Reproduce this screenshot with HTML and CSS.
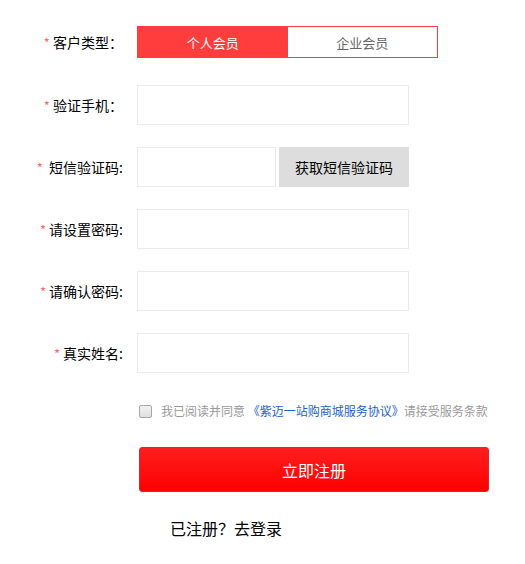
FILE: index.html
```html
<!DOCTYPE html>
<html lang="zh-CN">
<head>
<meta charset="UTF-8">
<meta name="viewport" content="width=device-width, initial-scale=1.0">
<title>注册</title>
<link rel="stylesheet" href="styles.css">
</head>
<body>
<form class="register">
    <div class="row row-type">
        <label class="label"><span class="star">*</span> 客户类型：</label>
        <div class="toggle">
            <a href="#" class="toggle-item active">个人会员</a>
            <a href="#" class="toggle-item">企业会员</a>
        </div>
    </div>
    <div class="row">
        <label class="label"><span class="star">*</span> 验证手机：</label>
        <input type="text" class="field">
    </div>
    <div class="row">
        <label class="label"><span class="star">*</span>&nbsp;&nbsp;短信验证码:</label>
        <div class="sms">
            <input type="text" class="field field-short">
            <button type="button" class="sms-btn">获取短信验证码</button>
        </div>
    </div>
    <div class="row">
        <label class="label"><span class="star">*</span> 请设置密码:</label>
        <input type="password" class="field">
    </div>
    <div class="row">
        <label class="label"><span class="star">*</span> 请确认密码:</label>
        <input type="password" class="field">
    </div>
    <div class="row">
        <label class="label"><span class="star">*</span> 真实姓名:</label>
        <input type="text" class="field">
    </div>
    <div class="agree">
        <input type="checkbox" id="agree">
        <label for="agree">我已阅读并同意 <a href="#">《紫迈一站购商城服务协议》</a>请接受服务条款</label>
    </div>
    <button type="submit" class="submit">立即注册</button>
    <p class="login">已注册？<a href="#">去登录</a></p>
</form>
</body>
</html>
```

FILE: styles.css
```css
body {
    margin: 0;
    font-family: "Noto Sans CJK SC", "Liberation Sans", sans-serif;
    font-size: 14px;
    color: #000;
    background-color: #fff;
}
.register {
    padding-top: 26px;
}
.row {
    display: flex;
    align-items: center;
    margin-bottom: 22px;
}
.row-type {
    margin-bottom: 27px;
}
.label {
    width: 123px;
    margin-right: 14px;
    text-align: right;
    line-height: 20px;
    white-space: nowrap;
}
.star {
    color: #f66;
    font-size: 13px;
}
.toggle {
    display: flex;
    width: 301px;
    height: 32px;
    box-sizing: border-box;
    border: 1px solid #ff3d3d;
}
.toggle-item {
    flex: 1;
    display: flex;
    align-items: center;
    justify-content: center;
    font-size: 13px;
    color: #666;
    text-decoration: none;
}
.toggle-item.active {
    background-color: #ff3d3d;
    color: #fff;
}
.field {
    width: 272px;
    height: 40px;
    box-sizing: border-box;
    margin: 0;
    padding: 0 10px;
    border: 1px solid #ebebeb;
    outline: none;
    font-family: inherit;
    font-size: 14px;
}
.sms {
    display: flex;
    gap: 3px;
}
.field-short {
    width: 139px;
}
.sms-btn {
    width: 130px;
    height: 40px;
    margin: 0;
    border: none;
    background-color: #dddddd;
    color: #000;
    font-family: inherit;
    font-size: 14px;
    cursor: pointer;
}
.agree {
    display: flex;
    align-items: center;
    margin: 30px 0 0 139px;
    font-size: 12px;
    color: #999;
    line-height: 16px;
}
.agree input {
    appearance: none;
    width: 13px;
    height: 13px;
    margin: 0 9px 0 0;
    border: 1px solid #a6a6a6;
    border-radius: 2px;
    background: linear-gradient(#f2f2f2, #dedede);
}
.agree a {
    color: #1a5fd0;
    text-decoration: none;
}
.submit {
    display: block;
    width: 350px;
    height: 45px;
    margin: 28px 0 0 139px;
    border: 1px solid #e62222;
    border-radius: 3px;
    background: linear-gradient(#ff1e1e, #ff0000);
    color: #fff;
    font-family: inherit;
    font-size: 16px;
    cursor: pointer;
}
.login {
    margin: 24px 0 0 170px;
    font-size: 16px;
    line-height: 24px;
}
.login a {
    color: #000;
    text-decoration: none;
}
```
